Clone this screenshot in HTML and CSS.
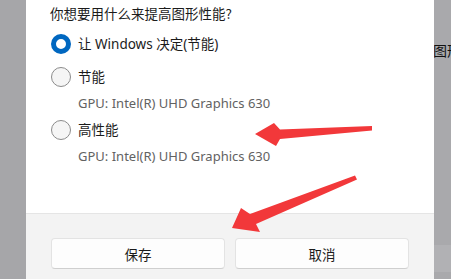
FILE: index.html
```html
<!DOCTYPE html>
<html lang="zh-CN">
<head>
<meta charset="utf-8">
<link rel="stylesheet" href="styles.css">
</head>
<body>
<div class="screen">
  <div class="strip-left"></div>
  <div class="dialog">
    <div class="content">
      <div class="heading">你想要用什么来提高图形性能?</div>
      <div class="options">
        <div class="option">
          <span class="radio checked"></span>
          <span class="label">让 Windows 决定(节能)</span>
        </div>
        <div class="option">
          <span class="radio"></span>
          <span class="label">节能</span>
        </div>
        <div class="sub">GPU: Intel(R) UHD Graphics 630</div>
        <div class="option gap">
          <span class="radio"></span>
          <span class="label">高性能</span>
        </div>
        <div class="sub">GPU: Intel(R) UHD Graphics 630</div>
      </div>
    </div>
    <div class="footer">
      <button class="btn">保存</button>
      <button class="btn">取消</button>
    </div>
  </div>
  <div class="strip-right">
    <div class="behind-text">图形设置</div>
    <div class="behind-btn"></div>
  </div>
  <svg class="arrows" width="451" height="279" viewBox="0 0 451 279">
    <polygon fill="#f2383a" points="255,134 274,123 280,129.5 372,126 372,130.5 280,139 276,146"/>
    <polygon fill="#f2383a" points="232,228 241,208 250,214 355,175.5 357,179.5 256,224 260,232"/>
  </svg>
</div>
</body>
</html>
```
FILE: styles.css
```css
* { box-sizing: border-box; }
html, body { margin: 0; padding: 0; }
body {
  width: 451px;
  height: 279px;
  overflow: hidden;
  font-family: "Segoe UI", "Noto Sans", "Noto Sans CJK SC", sans-serif;
  color: #1b1b1b;
}
.screen {
  position: relative;
  display: flex;
  width: 451px;
  height: 279px;
  background: #a8a8ab;
}
.strip-left {
  width: 26px;
  background: #a6a6a9;
}
.dialog {
  width: 408px;
  display: flex;
  flex-direction: column;
  background: #ffffff;
}
.content {
  height: 213px;
  padding: 3px 0 0 24px;
}
.heading {
  font-size: 13.5px;
  line-height: 20px;
  height: 20px;
  font-family: "Noto Sans CJK SC", sans-serif;
}
.options {
  margin-top: 5px;
  display: flex;
  flex-direction: column;
}
.option {
  height: 32px;
  display: flex;
  align-items: center;
}
.option + .option { margin-top: 1px; }
.option.gap { margin-top: 1px; }
.radio {
  width: 20px;
  height: 20px;
  margin-left: 1px;
  border-radius: 50%;
  border: 1px solid #8b8b8b;
  background: #f5f5f5;
  flex: none;
}
.radio.checked {
  border: 5.5px solid #0067c0;
  background: #ffffff;
}
.label {
  margin-left: 7px;
  font-size: 13.5px;
  line-height: 20px;
  font-family: "Noto Sans", "Noto Sans CJK SC", sans-serif;
}
.sub {
  margin-left: 28px;
  height: 20px;
  line-height: 20px;
  font-size: 13px;
  color: #626262;
  font-family: "Noto Sans", sans-serif;
}
.footer {
  flex: 1;
  background: #f3f3f3;
  border-top: 1px solid #e5e5e5;
  display: flex;
  gap: 10px;
  padding: 24px 25px 0 25px;
}
.btn {
  width: 174px;
  height: 31px;
  border: 1px solid #e3e3e3;
  border-bottom-color: #cfcfcf;
  border-radius: 4px;
  background: #fdfdfd;
  font-family: "Noto Sans CJK SC", sans-serif;
  font-size: 13.5px;
  color: #1b1b1b;
  padding: 0;
}
.strip-right {
  flex: 1;
  background: #a9a9ac;
  overflow: hidden;
  display: flex;
  flex-direction: column;
}
.behind-text {
  margin-top: 41px;
  margin-left: -1px;
  white-space: nowrap;
  font-size: 14px;
  line-height: 18px;
  color: #111;
  font-family: "Noto Sans CJK SC", sans-serif;
}
.behind-btn {
  margin-top: 186px;
  height: 27px;
  background: #b1b1b4;
}
.arrows {
  position: absolute;
  left: 0;
  top: 0;
}
```
